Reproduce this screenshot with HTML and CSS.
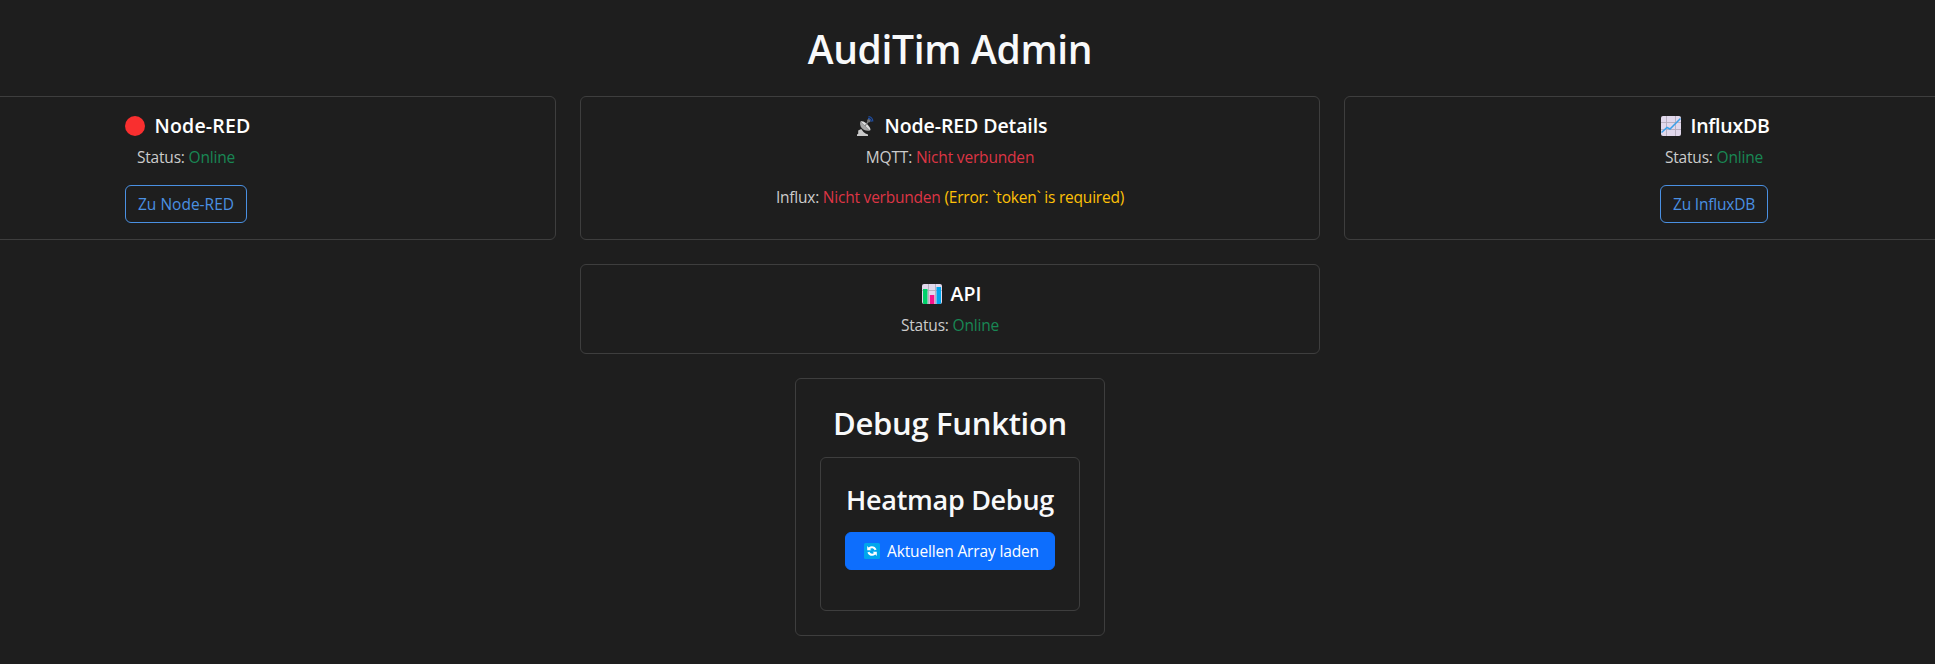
FILE: index.html
```html
<!DOCTYPE html>
<html lang="de">
<head>
<meta charset="utf-8">
<title>AudiTim Admin</title>
<link rel="stylesheet" href="styles.css">
</head>
<body>
<main class="page">
  <h1 class="page-title">AudiTim Admin</h1>
  <div class="row">
    <section class="card">
      <h5 class="card-title wide">
        <svg class="emoji" viewBox="0 0 20 20"><circle cx="10" cy="10" r="10" fill="#f92f2f"/></svg>
        <span>Node-RED</span>
      </h5>
      <p class="text">Status: <span class="ok">Online</span></p>
      <a class="btn btn-outline">Zu Node-RED</a>
    </section>
    <section class="card">
      <h5 class="card-title snug">
        <svg class="emoji" viewBox="0 0 20 20">
          <path d="M1 20v-1.500l1.200-.7V14.500l3-1.500 2.300 3 2 1.500 2.500 1V20z" fill="#c9c9c9"/>
          <path d="M4.500 5.500c-2 5 3 10.500 9.500 9z" fill="#a6a6a6"/>
          <path d="M4.500 5.500l9.500 9c2.500-1.500-5.500-11-9.500-9z" fill="#dedede"/>
          <path d="M9 10l3.500-5" stroke="#888" stroke-width="1.300"/>
          <circle cx="12.800" cy="4.800" r="1.700" fill="#777"/>
          <path d="M12 2.300a3.400 3.400 0 0 1 3.300 3.500M12.500 .7a4.600 4.600 0 0 1 4.300 4.800" fill="none" stroke="#1f4fa8" stroke-width="1.200"/>
        </svg>
        <span>Node-RED Details</span>
      </h5>
      <p class="text">MQTT: <span class="bad">Nicht verbunden</span></p>
      <p class="text long">Influx: <span class="bad">Nicht verbunden</span> <span class="warn">(Error: `token` is required)</span></p>
    </section>
    <section class="card">
      <h5 class="card-title tight">
        <svg class="emoji" viewBox="0 0 20 20">
          <rect width="20" height="20" rx="2" fill="#e1d8ec"/>
          <path d="M5.500 0v20M14.500 0v20M0 6.500h20M0 13.500h20" stroke="#b4acbc" stroke-width=".9"/>
          <path d="M.5 16.500l5.500-5 3 1.500 10.500-10.500" fill="none" stroke="#3ba0e8" stroke-width="1.500"/>
        </svg>
        <span>InfluxDB</span>
      </h5>
      <p class="text">Status: <span class="ok">Online</span></p>
      <a class="btn btn-outline tight">Zu InfluxDB</a>
    </section>
  </div>
  <section class="card">
    <h5 class="card-title">
      <svg class="emoji" viewBox="0 0 20 20">
        <rect width="20" height="20" rx="2" fill="#e1d8ec"/>
        <path d="M6.500 0v20M13.500 0v20M0 6.500h20" stroke="#b4acbc" stroke-width=".9"/>
        <path d="M1 5h4.500v15H2a1 1 0 0 1-1-1z" fill="#00d26a"/>
        <path d="M7.800 11h4.500v9H7.800z" fill="#f8138c"/>
        <path d="M14.500 3H19v16a1 1 0 0 1-1 1h-3.500z" fill="#00a6ed"/>
      </svg>
      <span>API</span>
    </h5>
    <p class="text">Status: <span class="ok">Online</span></p>
  </section>
  <section class="panel">
    <h2 class="panel-title">Debug Funktion</h2>
    <div class="panel-inner">
      <h3 class="inner-title">Heatmap Debug</h3>
      <button class="btn btn-primary">
        <svg class="emoji-sm" viewBox="0 0 16 16">
          <rect width="16" height="16" rx="1.500" fill="#00a6ed"/>
          <path d="M3.200 3v4.300h4.300L6 5.900c1.500-1.200 3.600-.8 4.600 1.300l2-.6C11.200 3 7.300 2.200 4.600 4.500zM12.800 13V8.700H8.500L10 10.100c-1.500 1.200-3.600.8-4.600-1.300l-2 .6c1.400 3.600 5.300 4.400 8 2.100z" fill="#fff"/>
        </svg>
        <span>Aktuellen Array laden</span>
      </button>
    </div>
  </section>
</main>
</body>
</html>
```
FILE: styles.css
```css
* { box-sizing: border-box; }
body {
  margin: 0;
  background: #1e1e1e;
  color: #ccc;
  font: 15.5px/24px "Open Sans", "Noto Sans", sans-serif;
  overflow: hidden;
}
h1, h2, h3, h5, p { margin: 0; white-space: nowrap; }
.page {
  width: 1900px;
  height: 664px;
  padding-top: 24px;
  display: flex;
  flex-direction: column;
  align-items: center;
  gap: 24px;
}
.page-title {
  height: 48px;
  font-size: 39px;
  line-height: 50px;
  font-weight: 600;
  letter-spacing: -.33px;
  color: #f8f9fa;
}
.row { display: flex; gap: 24px; }
.card {
  width: 740px;
  padding: 16px;
  border: 1px solid #3e3e3e;
  border-radius: 6px;
  text-align: center;
}
.row .card { height: 144px; }
.card-title {
  display: flex;
  justify-content: center;
  align-items: center;
  gap: 9px;
  height: 24px;
  margin-bottom: 8px;
  padding: 2px 0 0 3px;
  font-size: 19.5px;
  line-height: 24px;
  font-weight: 600;
  color: #fff;
}
.card-title.wide { padding-left: 4px; letter-spacing: .2px; }
.card-title.snug { letter-spacing: -.1px; }
.card-title.tight { letter-spacing: -.25px; }
.emoji { width: 20px; height: 20px; }
.text { margin-bottom: 16px; letter-spacing: -.18px; }
.text.long { letter-spacing: -.22px; }
.card > .text:last-child { margin-bottom: 0; }
.ok { color: #198754; }
.bad { color: #dc3545; }
.warn { color: #ffc107; }
.btn {
  display: inline-flex;
  align-items: center;
  justify-content: center;
  height: 38px;
  padding: 0 12px;
  border: 1px solid #4a90e2;
  border-radius: 6px;
  font: inherit;
}
.btn.tight { letter-spacing: -.21px; }
.btn-outline { color: #4a90e2; }
.btn-primary {
  width: 210px;
  padding: 0 9px 0 12px;
  gap: 7px;
  background: #0d6efd;
  border-color: #0d6efd;
  color: #fff;
  letter-spacing: -.14px;
}
.emoji-sm { width: 16px; height: 16px; }
.panel {
  width: 310px;
  height: 258px;
  padding: 24px;
  border: 1px solid #3e3e3e;
  border-radius: 6px;
  text-align: center;
}
.panel-title {
  height: 38px;
  font-size: 31px;
  line-height: 40px;
  font-weight: 600;
  letter-spacing: -.28px;
  color: #f8f9fa;
  margin-bottom: 16px;
}
.panel-inner {
  height: 154px;
  padding: 24px;
  border: 1px solid #3e3e3e;
  border-radius: 6px;
  display: flex;
  flex-direction: column;
  align-items: center;
}
.inner-title {
  height: 34px;
  font-size: 27px;
  line-height: 36px;
  font-weight: 600;
  letter-spacing: -.3px;
  color: #f8f9fa;
  margin-bottom: 16px;
}
```
